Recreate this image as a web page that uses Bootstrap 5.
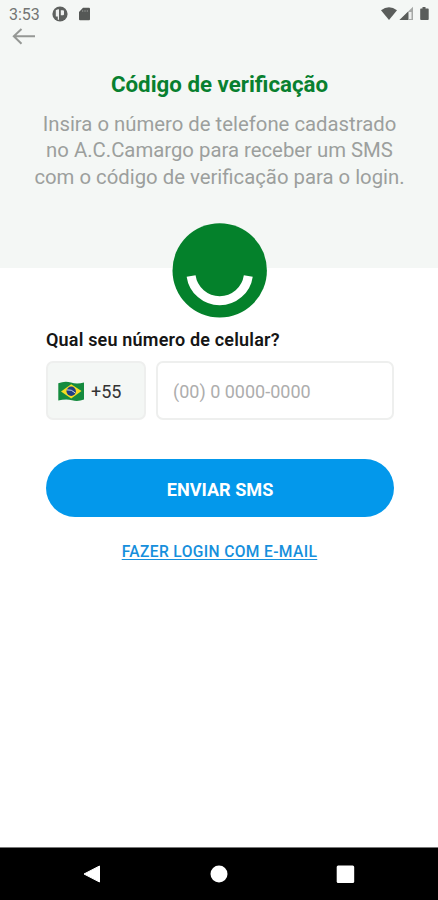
<!DOCTYPE html>
<html lang="pt-BR">
<head>
<meta charset="utf-8">
<meta name="viewport" content="width=device-width, initial-scale=1">
<title>Código de verificação</title>
<link href="https://cdn.jsdelivr.net/npm/bootstrap@5.3.0/dist/css/bootstrap.min.css" rel="stylesheet">
<style>
body{font-family:Roboto,sans-serif;background:#fff;overflow:hidden}
svg{display:block;flex:none}
.hero{background:#f4f7f5;height:268px}
.statusbar{height:28px;padding:0 7px 0 9px;color:#737573;font-size:16px;line-height:29px}
.clock{width:41px;white-space:nowrap}
.back{height:17px;padding-left:12px;color:#959895}
.headline{color:#08802f;font-size:22.300px;line-height:26px;font-weight:700;margin:26px 0 0;padding-left:1px;white-space:nowrap}
.intro{color:#9c9f9d;font-size:20.320px;line-height:26.4px;margin:14px 0 0;padding-left:1px;white-space:nowrap}
.logo{margin-top:-46px;padding-left:1px}
.form-area{padding:8px 44px 0 46px}
.question{font-size:18px;line-height:26px;font-weight:600;letter-spacing:.18px;color:#151515;padding-top:1px;margin-bottom:8px;white-space:nowrap}
.ddi,.phone{height:59px;border:2px solid #eeefee;border-radius:7px;font-size:18px}
.ddi{width:100px;background:#f4f7f5;color:#333;padding:1px 0 0 10px;gap:6px}
.phone.form-control{border:2px solid #eeefee;padding:2px 15px 0;color:#333}
.phone::placeholder{color:#adadad;opacity:1}
.send{height:58px;margin-top:39px;background:#0398eb;color:#fff;font-weight:700;font-size:18.100px;width:348px;border:0;padding-top:10px}
.send:hover{background:#0289d4;color:#fff}
.email{display:inline-block;color:#168fdc;font-size:15.600px;font-weight:500;letter-spacing:.36px;line-height:20px;text-underline-offset:2px;text-decoration-thickness:1px}
.link-row{padding-top:23px;margin-right:1px}
.navkeys{height:53px;border-top:1px solid #777;padding:0 82px}
</style>
</head>
<body>
<div class="vh-100 d-flex flex-column">
  <header class="hero text-center flex-shrink-0">
    <div class="statusbar d-flex align-items-center">
      <span class="clock text-start">3:53</span>
      <svg width="18" height="16" viewBox="0 0 18 16"><circle cx="10" cy="8" r="7.6" fill="#5d605e"/><path d="M5.800 4.200q1.200-1 3.200-1v10.500H7.800V10.500H5.800zM10.800 4.200h2.200q1 0 1 1v3q0 1-1 1h-2.200z" fill="#eceeed"/></svg>
      <svg class="ms-2" width="16" height="14" viewBox="0 0 16 14"><path d="M7 .8h6q1 0 1 1v10.500q0 1-1 1H4q-1 0-1-1V5z" fill="#555856"/><path d="M6.700 3v2M9 3v2M11.300 3v2" stroke="#858886"/></svg>
      <svg class="ms-auto" width="50" height="16" viewBox="0 0 50 16"><path d="M0 4.200Q8-1.500 16 4.200L8 14z" fill="#5a5d5b"/><path d="M18.500 14L32 .8V14z" fill="#a5a8a6"/><path d="M18.500 14L27 5.700V14z" fill="#5a5d5b"/><path d="M28 6h2.500v7H28z" fill="#eceeed"/><path d="M41.500 1h3v1.500H47q.7 0 .7.8V13q0 1-.7 1h-7q-.8 0-.8-1V3.300q0-.8.8-.8h1.500z" fill="#5a5d5b"/></svg>
    </div>
    <div class="back"><svg width="24" height="17" viewBox="0 0 24 17"><path d="M23 8.300H2M9.500 1L1.800 8.300l7.700 7.500" fill="none" stroke="currentColor" stroke-width="2"/></svg></div>
    <h1 class="headline">Código de verificação</h1>
    <p class="intro">Insira o número de telefone cadastrado<br>no A.C.Camargo para receber um SMS<br>com o código de verificação para o login.</p>
  </header>
  <main class="flex-grow-1">
    <div class="logo position-relative d-flex justify-content-center">
      <svg width="96" height="96" viewBox="0 0 96 96"><circle cx="47.700" cy="48.400" r="47.200" fill="#04812b"/><path d="M19.100 54A28.900 28.900 0 0 0 76.300 54" fill="none" stroke="#fff" stroke-width="9"/></svg>
    </div>
    <form class="form-area">
      <label class="question d-block" for="phone">Qual seu número de celular?</label>
      <div class="d-flex" style="gap:10px">
        <div class="ddi d-flex align-items-center flex-shrink-0">
          <svg width="27" height="21" viewBox="0 0 27 21"><path d="M.3 2.200Q7-.4 13 1.500T26 1.400V18.500Q20 21 14 19.300T.3 19.600z" fill="#148b3e"/><path d="M3 10.500L13.200 3.200l10.300 6.900-10.300 7.300z" fill="#f6dc24"/><circle cx="13.200" cy="10.300" r="4.700" fill="#213e82"/><path d="M9 8.900q4.500-.8 8.200 3" fill="none" stroke="#d8e5ec" stroke-width=".9"/></svg>
          <span>+55</span>
        </div>
        <input class="phone form-control" id="phone" type="tel" placeholder="(00) 0 0000-0000">
      </div>
      <button class="send btn rounded-pill d-block" type="button">ENVIAR SMS</button>
      <div class="link-row text-center"><a class="email" href="#">FAZER LOGIN COM E-MAIL</a></div>
    </form>
  </main>
  <footer class="navkeys bg-black d-flex align-items-center justify-content-between flex-shrink-0">
    <svg width="20" height="20" viewBox="0 0 20 20"><path d="M17.500 2v16L2 10z" fill="#fff" stroke="#fff" stroke-linejoin="round"/></svg>
    <svg width="18" height="18" viewBox="0 0 18 18"><circle cx="9" cy="9" r="8.500" fill="#fff"/></svg>
    <svg width="20" height="20" viewBox="0 0 20 20"><rect x=".7" y="1.500" width="17.500" height="17.500" rx="1.500" fill="#fff"/></svg>
  </footer>
</div>
<script src="https://cdn.jsdelivr.net/npm/bootstrap@5.3.0/dist/js/bootstrap.bundle.min.js"></script>
</body>
</html>
